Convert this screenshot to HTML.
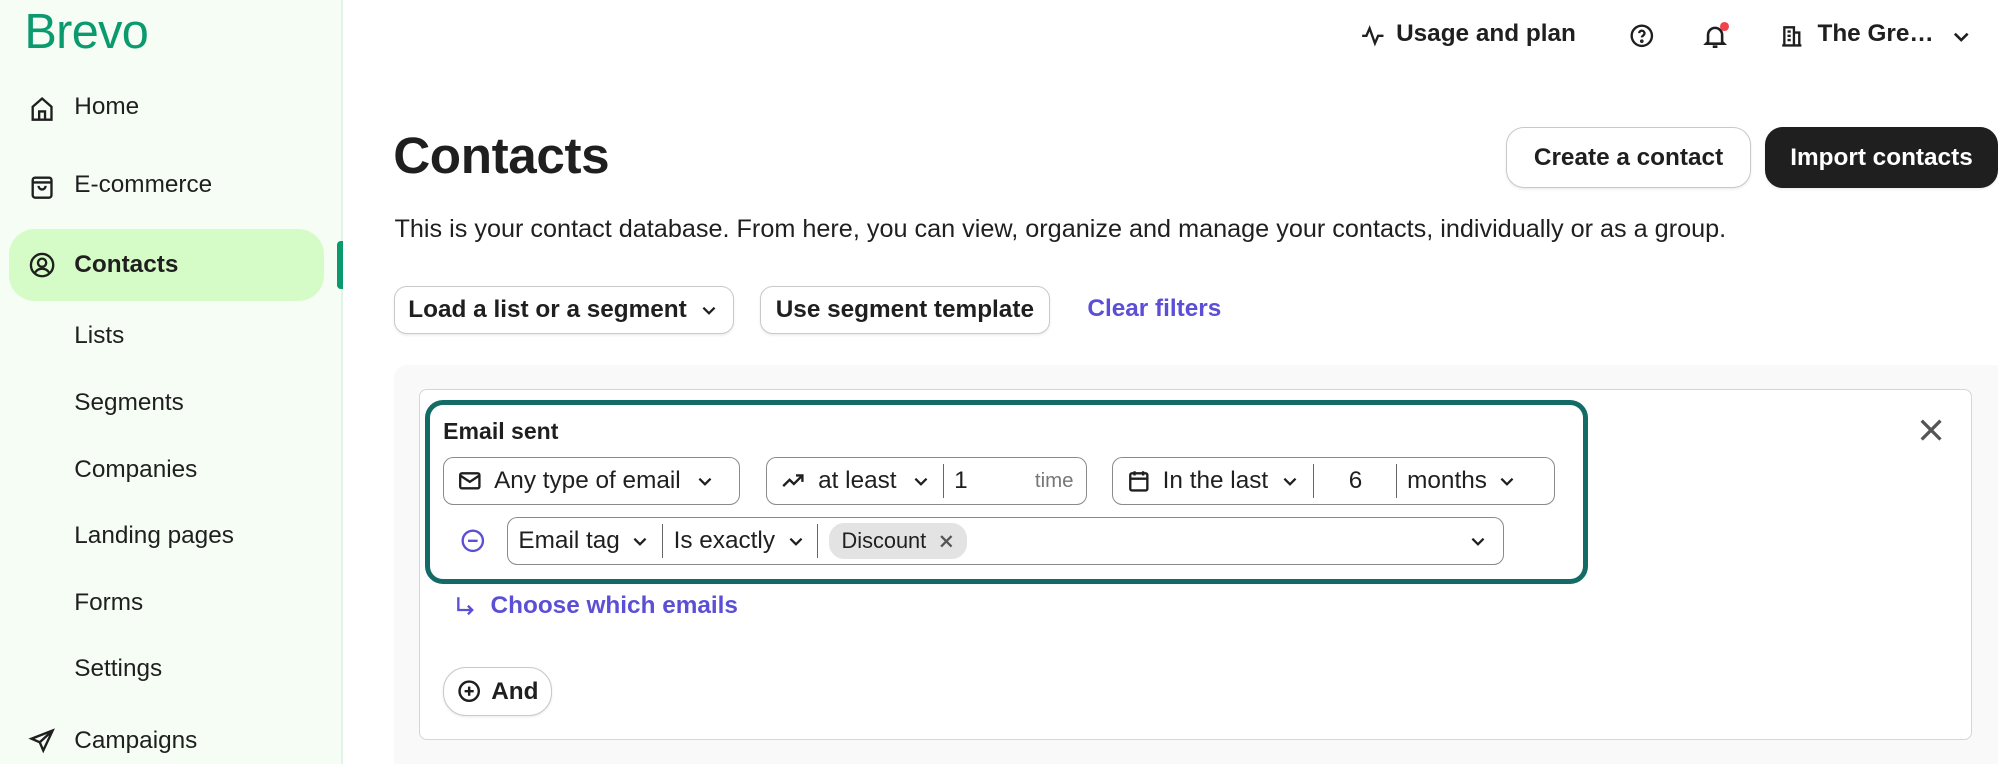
<!DOCTYPE html>
<html><head><meta charset="utf-8"><style>
*{box-sizing:border-box;margin:0;padding:0}
html,body{width:1998px;height:764px;overflow:hidden;background:#fff}
#w{zoom:1.2808;width:1560px;height:597px;position:relative;font-family:"Liberation Sans",sans-serif;color:#1f1f1f}
.a{position:absolute}
.side{left:0;top:0;width:268px;height:597px;background:#f5fdf4;border-right:2px solid #e2f3ea}
.logo{left:19px;top:3px;font-size:38px;color:#0b996e;letter-spacing:-0.5px}
.nav{left:58px;font-size:19px;line-height:24px}
.ic{left:22px;width:22px;height:22px}
.pill{left:7px;top:179px;width:246px;height:56px;background:#d5fcc6;border-radius:20px}
.btn{border:1px solid #c9c9c9;border-radius:12px;font-weight:bold;font-size:19px;display:flex;align-items:center;justify-content:center;background:#fff;box-shadow:0 1px 2px rgba(0,0,0,.08)}
.box{border:1.5px solid #8a8a8a;border-radius:8px;height:37px;font-size:19px;display:flex;align-items:center}
.sep{width:1px;height:26px;background:#666}
svg{display:block}
</style></head><body><div id="w">
<div class="a side"></div>
<div class="a" style="left:263px;top:188px;width:5px;height:38px;background:#0b996e;border-radius:3px 0 0 3px"></div>
<div class="a logo">Brevo</div>
<div class="a pill"></div>
<svg class="a ic" style="top:74px" viewBox="0 0 24 24" fill="none" stroke="#1f1f1f" stroke-width="2"><path d="M4 21V10l8-7 8 7v11zM9.5 21v-7h5v7"/></svg>
<div class="a nav" style="top:72px">Home</div>
<svg class="a ic" style="top:135px" viewBox="0 0 24 24" fill="none" stroke="#1f1f1f" stroke-width="2"><rect x="4" y="4" width="16" height="17" rx="2"/><path d="M4 8h16M9 11a3 3 0 006 0"/></svg>
<div class="a nav" style="top:133px">E-commerce</div>
<svg class="a ic" style="top:196px" viewBox="0 0 24 24" fill="none" stroke="#1f1f1f" stroke-width="2"><circle cx="12" cy="12" r="9.5"/><circle cx="12" cy="10" r="3.5"/><path d="M6 18.5a7 7 0 0112 0"/></svg>
<div class="a nav" style="top:195px;font-weight:bold">Contacts</div>
<div class="a nav" style="top:251px">Lists</div>
<div class="a nav" style="top:303px">Segments</div>
<div class="a nav" style="top:355px">Companies</div>
<div class="a nav" style="top:407px">Landing pages</div>
<div class="a nav" style="top:459px">Forms</div>
<div class="a nav" style="top:511px">Settings</div>
<svg class="a ic" style="top:568px" viewBox="0 0 24 24" fill="none" stroke="#1f1f1f" stroke-width="2"><path d="M21 3L3 10l7 3 3 7zM10 13l11-10"/></svg>
<div class="a nav" style="top:567px">Campaigns</div>

<svg class="a" style="left:1062px;top:18px" width="20" height="20" viewBox="0 0 24 24" fill="none" stroke="#1f1f1f" stroke-width="2.2"><path d="M2 12h4l3-7 5 14 3-7h5"/></svg>
<div class="a" style="left:1090px;top:16px;font-size:19px;font-weight:bold">Usage and plan</div>
<svg class="a" style="left:1272px;top:18px" width="20" height="20" viewBox="0 0 24 24" fill="none" stroke="#1f1f1f" stroke-width="2.2"><circle cx="12" cy="12" r="9.5"/><path d="M9.5 9.5a2.5 2.5 0 115 .5c0 1.5-2.5 2-2.5 3.5"/><circle cx="12" cy="17" r=".6" fill="#1f1f1f"/></svg>
<svg class="a" style="left:1328px;top:17px" width="22" height="22" viewBox="0 0 24 24" fill="none" stroke="#1f1f1f" stroke-width="2.2"><path d="M6 17V11a6 6 0 0112 0v6l1.5 1.5h-15zM10 21h4"/></svg>
<div class="a" style="left:1343px;top:17px;width:7px;height:7px;border-radius:50%;background:#f0434b"></div>
<svg class="a" style="left:1389px;top:18px" width="20" height="20" viewBox="0 0 24 24" fill="none" stroke="#1f1f1f" stroke-width="2.2"><path d="M3 21h18M5 21V4h9v17M14 9h5v12M8 8h3M8 12h3M8 16h3"/></svg>
<div class="a" style="left:1419px;top:16px;font-size:19px;font-weight:bold">The Gre…</div>
<svg class="a" style="left:1523px;top:20px" width="16" height="16" viewBox="0 0 16 16" fill="none" stroke="#1f1f1f" stroke-width="2"><path d="M3 6l5 5 5-5"/></svg>

<div class="a" style="left:307px;top:98px;font-size:40px;font-weight:bold;letter-spacing:-0.3px">Contacts</div>
<div class="a btn" style="left:1176px;top:99px;width:191px;height:48px;border-radius:14px">Create a contact</div>
<div class="a btn" style="left:1378px;top:99px;width:182px;height:48px;border-radius:14px;background:#1f1f1f;color:#fff;border-color:#1f1f1f">Import contacts</div>
<div class="a" style="left:308px;top:168px;font-size:19.7px">This is your contact database. From here, you can view, organize and manage your contacts, individually or as a group.</div>

<div class="a btn" style="left:308px;top:223px;width:265px;height:38px;border-radius:10px;justify-content:flex-start;padding-left:10px;gap:10px">Load a list or a segment <svg width="14" height="14" viewBox="0 0 16 16" fill="none" stroke="#1f1f1f" stroke-width="2"><path d="M3 6l5 5 5-5"/></svg></div>
<div class="a btn" style="left:593px;top:223px;width:227px;height:38px;border-radius:10px">Use segment template</div>
<div class="a" style="left:849px;top:230px;font-size:19px;font-weight:bold;color:#5b4fd6">Clear filters</div>

<div class="a" style="left:308px;top:285px;width:1260px;height:320px;background:#f9f9f9;border-radius:10px"></div>
<div class="a" style="left:327px;top:304px;width:1213px;height:274px;background:#fff;border:1.5px solid #d6d6d6;border-radius:6px"></div>
<svg class="a" style="left:1497px;top:325px" width="22" height="22" viewBox="0 0 24 24" fill="none" stroke="#555" stroke-width="2.8"><path d="M4 4l16 16M20 4L4 20"/></svg>
<div class="a" style="left:332px;top:312px;width:908px;height:144px;border:4px solid #136b68;border-radius:14px"></div>
<div class="a" style="left:346px;top:326px;font-size:18px;font-weight:bold">Email sent</div>

<div class="a box" style="left:346px;top:357px;width:232px;padding-left:10px">
<svg width="20" height="20" viewBox="0 0 24 24" fill="none" stroke="#1f1f1f" stroke-width="2.2"><rect x="3" y="5" width="18" height="14" rx="1.5"/><path d="M3 7l9 6 9-6"/></svg>
<span style="margin-left:9px">Any type of email</span>
<svg style="margin-left:12px" width="14" height="14" viewBox="0 0 16 16" fill="none" stroke="#1f1f1f" stroke-width="2"><path d="M3 6l5 5 5-5"/></svg></div>

<div class="a box" style="left:598px;top:357px;width:251px;padding-left:10px">
<svg width="20" height="20" viewBox="0 0 24 24" fill="none" stroke="#1f1f1f" stroke-width="2.2"><path d="M3 17l6-6 4 4 8-8M15 7h6v6"/></svg>
<span style="margin-left:10px">at least</span>
<svg style="margin-left:12px" width="14" height="14" viewBox="0 0 16 16" fill="none" stroke="#1f1f1f" stroke-width="2"><path d="M3 6l5 5 5-5"/></svg>
<div class="sep" style="margin-left:10px"></div>
<span style="margin-left:8px">1</span>
<span style="margin-left:auto;margin-right:10px;font-size:16px;color:#777">time</span></div>

<div class="a box" style="left:868px;top:357px;width:346px;padding-left:10px">
<svg width="20" height="20" viewBox="0 0 24 24" fill="none" stroke="#1f1f1f" stroke-width="2.2"><rect x="4" y="5" width="16" height="16" rx="1.5"/><path d="M4 10h16M8 3v4M16 3v4"/></svg>
<span style="margin-left:9px">In the last</span>
<svg style="margin-left:10px" width="14" height="14" viewBox="0 0 16 16" fill="none" stroke="#1f1f1f" stroke-width="2"><path d="M3 6l5 5 5-5"/></svg>
<div class="sep" style="margin-left:11px"></div>
<span style="margin-left:27px">6</span>
<div class="sep" style="margin-left:26px"></div>
<span style="margin-left:8px">months</span>
<svg style="margin-left:9px" width="14" height="14" viewBox="0 0 16 16" fill="none" stroke="#1f1f1f" stroke-width="2"><path d="M3 6l5 5 5-5"/></svg></div>

<svg class="a" style="left:359px;top:412px" width="20" height="20" viewBox="0 0 24 24" fill="none" stroke="#5b4fd6" stroke-width="2.2"><circle cx="12" cy="12" r="9.5"/><path d="M7.5 12h9"/></svg>
<div class="a box" style="left:396px;top:404px;width:778px;padding-left:8px">
<span>Email tag</span>
<svg style="margin-left:9px" width="14" height="14" viewBox="0 0 16 16" fill="none" stroke="#1f1f1f" stroke-width="2"><path d="M3 6l5 5 5-5"/></svg>
<div class="sep" style="margin-left:10px"></div>
<span style="margin-left:8px">Is exactly</span>
<svg style="margin-left:9px" width="14" height="14" viewBox="0 0 16 16" fill="none" stroke="#1f1f1f" stroke-width="2"><path d="M3 6l5 5 5-5"/></svg>
<div class="sep" style="margin-left:10px"></div>
<div style="margin-left:8px;background:#e3e3e3;border-radius:12px;height:28px;padding:0 10px;display:flex;align-items:center;font-size:17px">Discount
<svg style="margin-left:9px" width="13" height="13" viewBox="0 0 16 16" fill="none" stroke="#555" stroke-width="2.2"><path d="M3 3l10 10M13 3L3 13"/></svg></div>
<svg style="margin-left:auto;margin-right:12px" width="14" height="14" viewBox="0 0 16 16" fill="none" stroke="#1f1f1f" stroke-width="2"><path d="M3 6l5 5 5-5"/></svg></div>

<svg class="a" style="left:354px;top:464px" width="20" height="20" viewBox="0 0 24 24" fill="none" stroke="#5b4fd6" stroke-width="2.2"><path d="M5 3v12h13M14 11l4 4-4 4"/></svg>
<div class="a" style="left:383px;top:462px;font-size:19px;font-weight:bold;color:#5b4fd6">Choose which emails</div>

<div class="a btn" style="left:346px;top:521px;width:85px;height:38px;border-radius:18px;gap:8px">
<svg width="19" height="19" viewBox="0 0 24 24" fill="none" stroke="#1f1f1f" stroke-width="2.4"><circle cx="12" cy="12" r="9.5"/><path d="M12 7.5v9M7.5 12h9"/></svg>And</div>
</div></body></html>
